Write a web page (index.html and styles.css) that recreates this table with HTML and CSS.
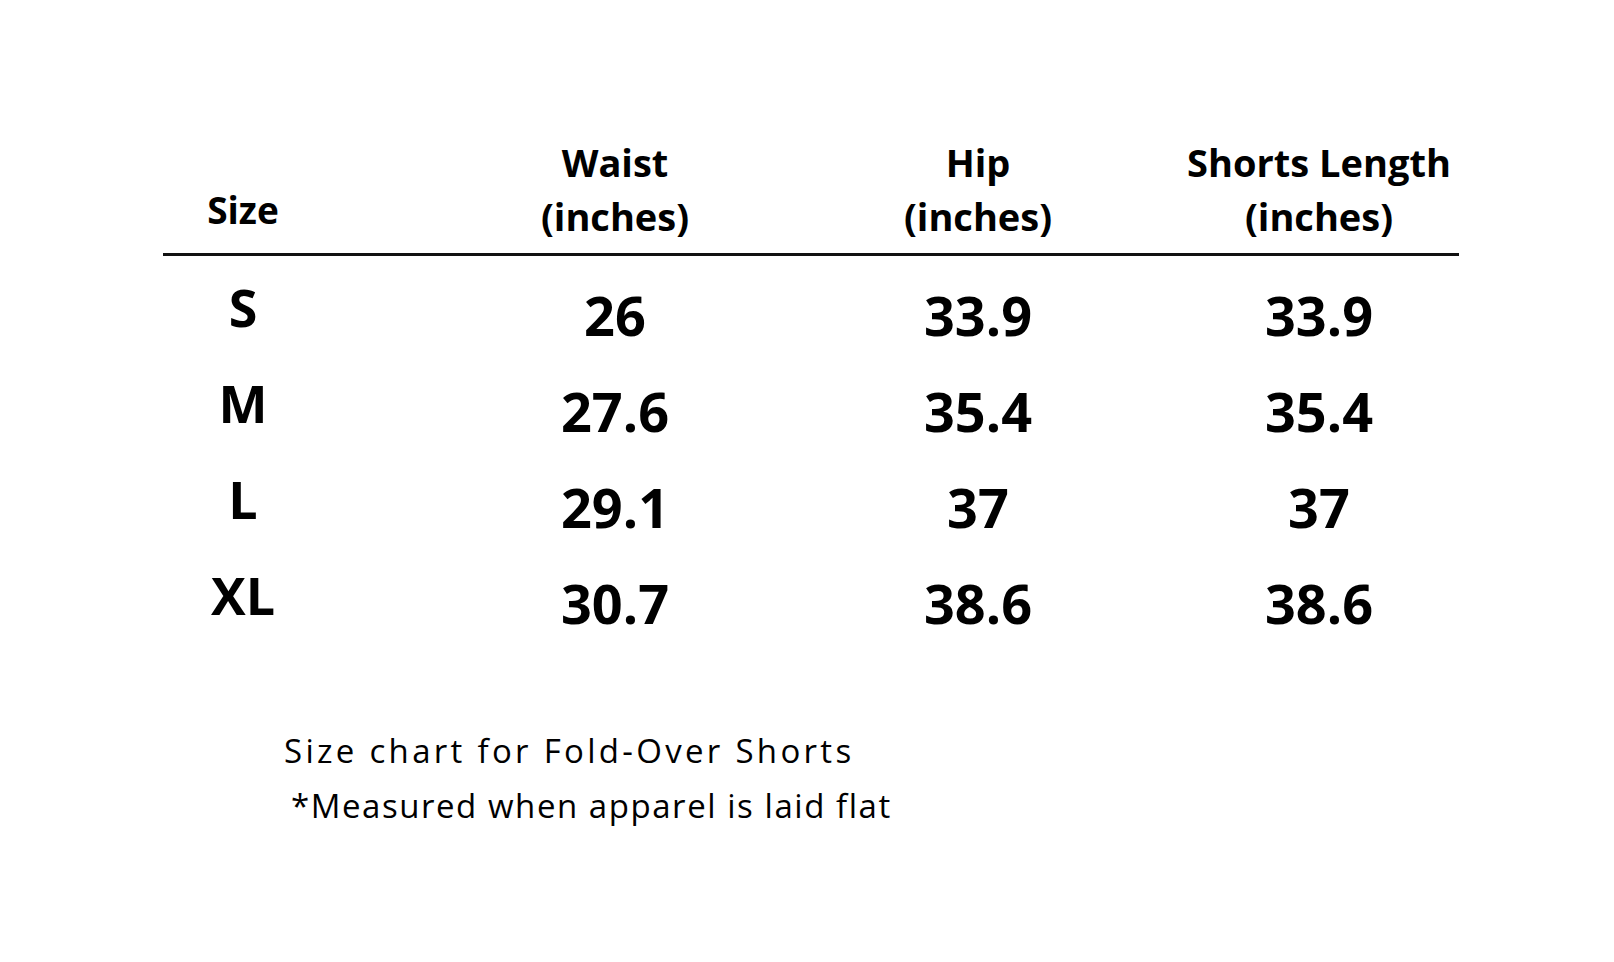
FILE: index.html
```html
<!DOCTYPE html>
<html lang="en">
<head>
<meta charset="utf-8">
<title>Size chart for Fold-Over Shorts</title>
<link rel="stylesheet" href="styles.css">
</head>
<body>
<main class="chart">
  <div class="head grid">
    <div class="cell c1 size-head">Size</div>
    <div class="cell c2">Waist<br>(inches)</div>
    <div class="cell c3">Hip<br>(inches)</div>
    <div class="cell c4">Shorts Length<br>(inches)</div>
  </div>
  <div class="rule"></div>
  <div class="body">
    <div class="row grid">
      <div class="cell c1 label">S</div>
      <div class="cell c2">26</div>
      <div class="cell c3">33.9</div>
      <div class="cell c4">33.9</div>
    </div>
    <div class="row grid">
      <div class="cell c1 label">M</div>
      <div class="cell c2">27.6</div>
      <div class="cell c3">35.4</div>
      <div class="cell c4">35.4</div>
    </div>
    <div class="row grid">
      <div class="cell c1 label">L</div>
      <div class="cell c2">29.1</div>
      <div class="cell c3">37</div>
      <div class="cell c4">37</div>
    </div>
    <div class="row grid">
      <div class="cell c1 label">XL</div>
      <div class="cell c2">30.7</div>
      <div class="cell c3">38.6</div>
      <div class="cell c4">38.6</div>
    </div>
  </div>
</main>
<footer class="notes">
  <p class="note">Size chart for Fold-Over Shorts</p>
  <p class="note note-sub">*Measured when apparel is laid flat</p>
</footer>
</body>
</html>
```

FILE: styles.css
```css
html, body {
  margin: 0;
  padding: 0;
  background: #ffffff;
  color: #000000;
  font-family: "Open Sans", "Noto Sans", sans-serif;
}

.chart {
  width: 1296px;
  margin-left: 163px;
  padding-top: 135px;
}

.grid {
  display: grid;
  grid-template-columns: 266px 367px 352px 311px;
}

.cell {
  text-align: center;
}

.c1 { padding-right: 106px; }
.c2 { padding-left: 5px; }
.c3 { padding-left: 12px; }
.c4 { padding-left: 31px; }

.head {
  align-items: end;
  font-size: 38px;
  font-weight: 700;
  line-height: 54px;
}

.size-head {
  padding-bottom: 6px;
  font-size: 37px;
}

.rule {
  margin-top: 10px;
  height: 3px;
  background: #111111;
}

.body {
  padding-top: 11px;
}

.row {
  height: 96px;
  align-items: center;
  font-size: 54px;
  font-weight: 700;
  line-height: 96px;
}

.label {
  padding-bottom: 16px;
  line-height: 80px;
  font-size: 52px;
}

.notes {
  margin-left: 284px;
  padding-top: 72px;
}

.note {
  margin: 0;
  font-size: 33px;
  font-weight: 400;
  line-height: 55px;
  letter-spacing: 3.3px;
}

.note-sub {
  padding-left: 7px;
  letter-spacing: 1.55px;
}
```
